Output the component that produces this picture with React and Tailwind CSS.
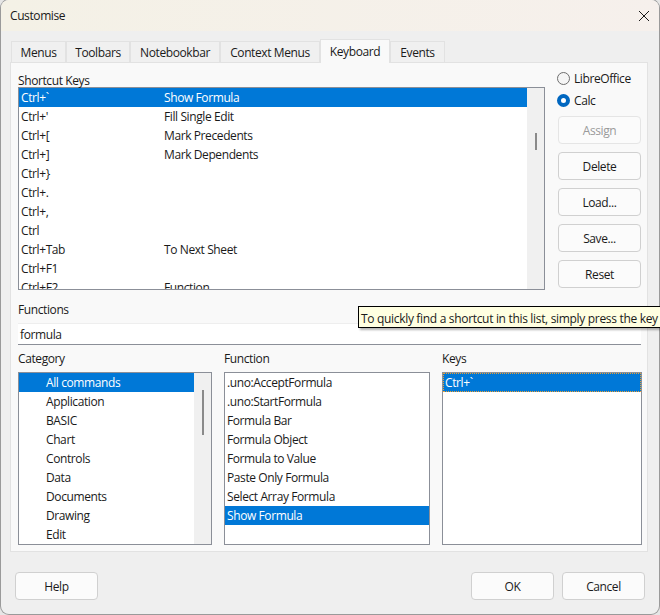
import React from 'react'

const shortcuts = [
    ['Ctrl+`', 'Show Formula'],
    ["Ctrl+'", 'Fill Single Edit'],
    ['Ctrl+[', 'Mark Precedents'],
    ['Ctrl+]', 'Mark Dependents'],
    ['Ctrl+}', ''],
    ['Ctrl+.', ''],
    ['Ctrl+,', ''],
    ['Ctrl', ''],
    ['Ctrl+Tab', 'To Next Sheet'],
    ['Ctrl+F1', ''],
    ['Ctrl+F2', 'Function'],
]
const categories = ['All commands', 'Application', 'BASIC', 'Chart', 'Controls', 'Data', 'Documents', 'Drawing', 'Edit']
const functions = ['.uno:AcceptFormula', '.uno:StartFormula', 'Formula Bar', 'Formula Object', 'Formula to Value', 'Paste Only Formula', 'Select Array Formula', 'Show Formula']
const tabs = [
    ['Menus', 'w-[55px]'],
    ['Toolbars', 'w-[64px]'],
    ['Notebookbar', 'w-[90px]'],
    ['Context Menus', 'w-[100px]'],
]

const Btn = ({ label, className = '' }) => (
    <div className={`w-[83px] h-[28px] pt-[2px] flex items-center justify-center rounded-[4px] border border-[#d0d0d0] bg-[#fbfbfb] ${className}`}>{label}</div>
)

const Row = ({ selected, children }) => (
    <div className={`h-[19px] leading-[20px] whitespace-nowrap ${selected ? 'bg-[#0078d7] text-white' : ''}`}>{children}</div>
)

const Scrollbar = ({ thumb }) => (
    <div className={`w-[17px] shrink-0 bg-[#f0f0f0] flex justify-center ${thumb}`}>
        <div className="w-[2px] h-full bg-[#8a8a8a]"></div>
    </div>
)

const App = () => {
    return (
        <div className="relative w-[660px] h-[615px] overflow-hidden bg-[#e6e6e6] text-[12px] tracking-[-0.4px] text-[#1a1a1a]" style={{ fontFamily: '"Open Sans", "Noto Sans", sans-serif' }}>
            <div className="w-[658px] h-[614px] ml-px rounded-lg overflow-hidden bg-[#efefef] shadow-[0_0_0_1px_#9a9a9a] flex flex-col">
                <div className="h-[31px] shrink-0 flex items-center justify-between pl-[9px] pr-[9px] bg-linear-to-r from-[#f4f1e6] to-[#f6f0ec]">
                    <span>Customise</span>
                    <svg width="12" height="12" viewBox="0 0 12 12" stroke="#1a1a1a" strokeWidth="1" fill="none"><path d="M1 1l10 10M11 1L1 11" /></svg>
                </div>

                <div className="flex items-end h-[31px] shrink-0 pl-[10px]">
                    {tabs.map(([name, width]) => (
                        <div key={name} className={`${width} h-[21px] pt-[2px] flex items-center justify-center border border-b-0 border-[#e2e2e2] bg-[#f0f0f0]`}>{name}</div>
                    ))}
                    <div className="w-[70px] h-[24px] mb-[-1px] z-10 flex items-center justify-center border border-b-0 border-[#e2e2e2] bg-[#f9f9f9]">Keyboard</div>
                    <div className="w-[55px] h-[21px] pt-[2px] flex items-center justify-center border border-b-0 border-[#e2e2e2] bg-[#f0f0f0]">Events</div>
                </div>

                <div className="w-[638px] h-[490px] ml-[9px] border border-[#e2e2e2] bg-[#f9f9f9] pl-[7px] flex flex-col">
                    <div className="flex h-[226px] shrink-0">
                        <div className="w-[527px]">
                            <div className="h-[24px] pt-[10px] leading-[15px]">Shortcut Keys</div>
                            <div className="h-[203px] border border-[#8b8f98] bg-white flex overflow-hidden">
                                <div className="w-[508px] h-full overflow-hidden">
                                    {shortcuts.map(([key, name], i) => (
                                        <Row key={key} selected={i === 0}>
                                            <div className="flex pl-[2px]">
                                                <span className="w-[143px]">{key}</span>
                                                <span>{name}</span>
                                            </div>
                                        </Row>
                                    ))}
                                </div>
                                <Scrollbar thumb="pt-[45px] pb-[139px]" />
                            </div>
                        </div>
                        <div className="ml-[13px] pt-[6px] flex flex-col">
                            <div className="flex items-center h-[18px] -ml-px gap-[4px]">
                                <span className="w-[13px] h-[13px] rounded-full border border-[#6e6e6e] bg-[#f5f5f5]"></span>
                                <span className="pt-px">LibreOffice</span>
                            </div>
                            <div className="flex items-center h-[18px] mt-[4px] -ml-px gap-[4px]">
                                <span className="w-[13px] h-[13px] rounded-full border-[4px] border-[#0067c0] bg-white"></span>
                                <span className="pt-px">Calc</span>
                            </div>
                            <Btn label="Assign" className="mt-[7px] text-[#9a9a9a] border-[#e5e5e5] bg-[#f7f7f7]" />
                            <Btn label="Delete" className="mt-[8px]" />
                            <Btn label="Load..." className="mt-[8px]" />
                            <Btn label="Save..." className="mt-[8px]" />
                            <Btn label="Reset" className="mt-[8px]" />
                        </div>
                    </div>

                    <div className="h-[34px] shrink-0 pt-[13px] leading-[15px]">Functions</div>
                    <div className="w-[623px] h-[22px] shrink-0 bg-white border-t border-[#eeeeee] border-b border-b-[#8b8f98] pl-[2px] leading-[22px]">formula</div>

                    <div className="flex mt-[7px] gap-[12px] h-[20px] shrink-0 leading-[14px]">
                        <div className="w-[194px]">Category</div>
                        <div className="w-[206px]">Function</div>
                        <div>Keys</div>
                    </div>

                    <div className="flex gap-[12px] h-[173px] shrink-0">
                        <div className="w-[194px] border border-[#8b8f98] bg-white flex overflow-hidden">
                            <div className="flex-1 overflow-hidden">
                                {categories.map((name, i) => (
                                    <Row key={name} selected={i === 0}><span className="pl-[27px]">{name}</span></Row>
                                ))}
                            </div>
                            <Scrollbar thumb="pt-[17px] pb-[109px]" />
                        </div>
                        <div className="w-[206px] border border-[#8b8f98] bg-white overflow-hidden">
                            {functions.map((name, i) => (
                                <Row key={name} selected={i === 7}><span className="pl-[2px]">{name}</span></Row>
                            ))}
                        </div>
                        <div className="w-[200px] border border-[#8b8f98] bg-white overflow-hidden">
                            <div className="h-[19px] leading-[18px] pl-[1px] bg-[#0078d7] text-white border border-dotted border-[#f0a030]">Ctrl+`</div>
                        </div>
                    </div>
                </div>

                <div className="flex justify-between pt-[20px] pl-[14px] pr-[14px]">
                    <Btn label="Help" />
                    <div className="flex gap-[8px]">
                        <Btn label="OK" className="border-[#0067c0]" />
                        <Btn label="Cancel" />
                    </div>
                </div>
            </div>

            <div className="absolute left-[358px] top-[306px] w-[310px] h-[22px] pl-[2px] leading-[23px] tracking-[-0.32px] whitespace-nowrap bg-[#ffffe1] border border-black shadow-[2px_2px_2px_rgba(0,0,0,0.3)]">To quickly find a shortcut in this list, simply press the key</div>
        </div>
    )
}

export default App
